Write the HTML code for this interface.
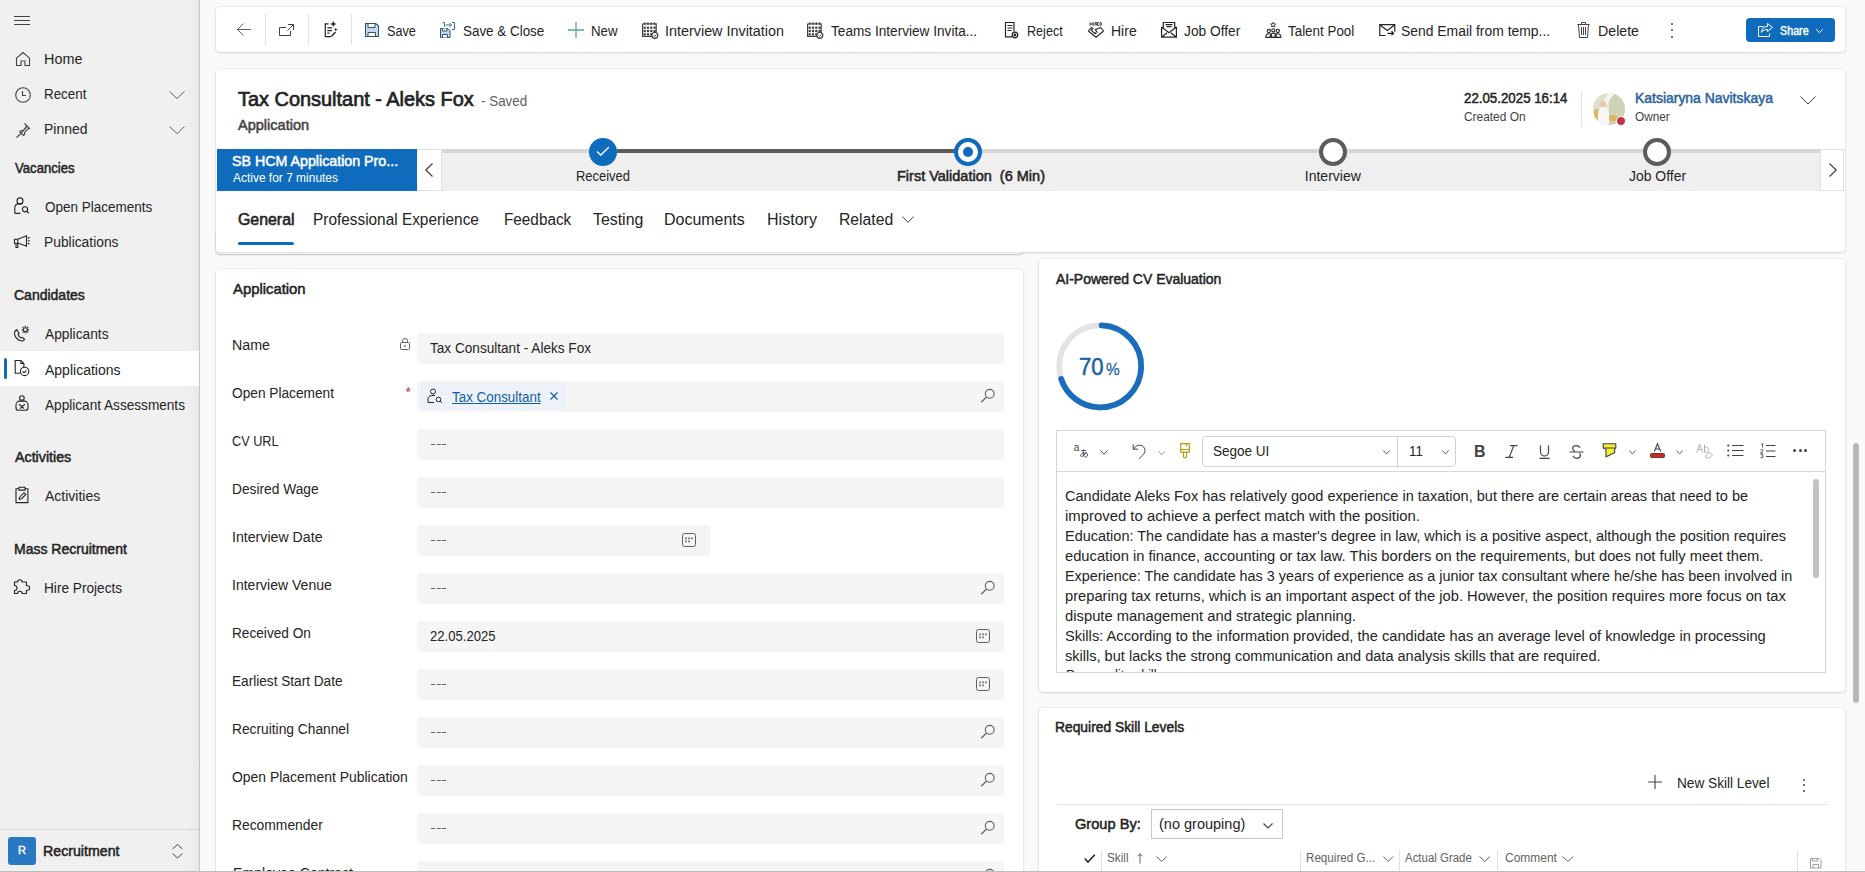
<!DOCTYPE html>
<html><head><meta charset="utf-8">
<style>
*{box-sizing:border-box;margin:0;padding:0}
html,body{width:1865px;height:872px;overflow:hidden}
body{font-family:"Liberation Sans",sans-serif;background:#fafafa;color:#242424;position:relative;font-size:14px}
.abs{position:absolute}
.t{position:absolute;white-space:pre;line-height:1}
.card{position:absolute;background:#fff;border-radius:4px;box-shadow:0 0 2px rgba(0,0,0,.12),0 1px 3px rgba(0,0,0,.13)}
svg{position:absolute;overflow:visible}
.inp{position:absolute;background:#f5f5f5;border-radius:4px;height:31px}
</style></head><body>
<div class="abs" style="left:0;top:0;width:199px;height:872px;background:#f0f0f0"></div>
<div class="abs" style="left:199px;top:0;width:1px;height:872px;background:#c4c4c4"></div>
<div class="abs" style="left:188px;top:0;width:11px;height:872px;background:linear-gradient(90deg,rgba(0,0,0,0),rgba(0,0,0,.035))"></div>
<svg style="left:14px;top:16px;" width="16" height="9" viewBox="0 0 16 9" fill="none" stroke="#424242" stroke-width="1"><path d="M0 .5H16M0 4.5H16M0 8.5H16" stroke="#424242"/></svg>
<div class="abs" style="left:0px;top:351px;width:199px;height:35px;background:#ffffff;"></div>
<div class="abs" style="left:4px;top:358px;width:3px;height:21px;background:#0f6cbd;border-radius:2px"></div>
<svg style="left:15px;top:51px;" width="16" height="16" viewBox="0 0 16 16" fill="none" stroke="#424242" stroke-width="1"><path d="M1.5 7.2 8 1.5l6.5 5.7V14.5h-4.5v-4.5h-4v4.5H1.5z" stroke="#424242" stroke-width="1.1"/></svg>
<div class="t" id="t0" style="left:43.97px;top:52.15px;font-size:14px;font-weight:400;color:#242424;transform:scaleX(1.0278);transform-origin:0 0;">Home</div>
<svg style="left:15px;top:87px;" width="16" height="16" viewBox="0 0 16 16" fill="none" stroke="#424242" stroke-width="1"><circle cx="8" cy="8" r="7.3" stroke="#424242" stroke-width="1.1"/><path d="M7.5 4v4.5H11" stroke="#424242" stroke-width="1.1"/></svg>
<div class="t" id="t1" style="left:44.05px;top:87.15px;font-size:14px;font-weight:400;color:#242424;transform:scaleX(0.9545);transform-origin:0 0;">Recent</div>
<svg style="left:15px;top:122px;" width="16" height="16" viewBox="0 0 16 16" fill="none" stroke="#424242" stroke-width="1"><path d="M9.5 1.5l5 5-2 .8-2.7 2.7-.3 2.5-1 1-2.2-2.2L1.5 15.5M6.3 11.3 4.7 9.7l1-1 2.5-.3L10.9 5.7l.8-2z" stroke="#424242" stroke-width="1.1"/></svg>
<div class="t" id="t2" style="left:44.00px;top:122.15px;font-size:14px;font-weight:400;color:#242424;">Pinned</div>
<div class="t" id="t3" style="left:14.97px;top:161.15px;font-size:14px;-webkit-text-stroke:0.50px #242424;color:#242424;transform:scaleX(0.9375);transform-origin:0 0;">Vacancies</div>
<svg style="left:0;top:0" width="40" height="872" viewBox="0 0 40 872" fill="none" stroke="#242424" stroke-width="1.1"><circle cx="20" cy="200.9" r="3"/><path d="M14.8 213.4v-5.5c0-2.3 1.7-4 4-4h3M14.8 213.4h5.5"/><circle cx="25" cy="209.3" r="2.6"/><path d="M26.9 211.2 29 213.4"/></svg>
<div class="t" id="t4" style="left:45.00px;top:200.15px;font-size:14px;font-weight:400;color:#242424;transform:scaleX(0.9640);transform-origin:0 0;">Open Placements</div>
<svg style="left:0;top:0" width="40" height="872" viewBox="0 0 40 872" fill="none" stroke="#242424" stroke-width="1.1"><path d="M14.5 239.2h3.2v4.3h-3.2zM17.7 239.2l8.8-3.5v10.5l-8.8-3.3zM16 243.5v4h1.8v-4M27.8 238.5l1.7-1.2M27.8 240.8h2M27.8 243l1.7 1.2"/></svg>
<div class="t" id="t5" style="left:44.01px;top:235.15px;font-size:14px;font-weight:400;color:#242424;transform:scaleX(0.9865);transform-origin:0 0;">Publications</div>
<div class="t" id="t6" style="left:14.00px;top:288.15px;font-size:14px;-webkit-text-stroke:0.50px #242424;color:#242424;">Candidates</div>
<svg style="left:0;top:0" width="40" height="872" viewBox="0 0 40 872" fill="none" stroke="#242424" stroke-width="1.1"><path d="M16.8 329.8c-1.6.8-2.6 2.2-2.3 4 .6 3 3.3 6.2 6.5 7 1.6.4 3-.4 3.6-1.5l-2.1-2-1.4.7c-1.4-.6-2.6-2-3-3.4l1-1z"/><circle cx="25.4" cy="329.7" r="2"/><path d="M25.4 325.8v1.3M25.4 332.3v1.3M21.5 329.7h1.3M28 329.7h1.3M22.6 326.9l.9.9M27.3 331.6l.9.9M28.2 326.9l-.9.9M23.5 331.6l-.9.9"/></svg>
<div class="t" id="t7" style="left:45.00px;top:327.15px;font-size:14px;font-weight:400;color:#242424;transform:scaleX(0.9844);transform-origin:0 0;">Applicants</div>
<svg style="left:0;top:0" width="40" height="872" viewBox="0 0 40 872" fill="none" stroke="#242424" stroke-width="1.1"><path d="M20 373.3h-4.8V360.5h5.7l3 3v3.5M20.9 360.5v3h3"/><circle cx="24.6" cy="371.4" r="4.2"/><path d="M22.7 371.5l1.3 1.3 2.4-2.4"/></svg>
<div class="t" id="t8" style="left:45.00px;top:363.15px;font-size:14px;font-weight:400;color:#242424;">Applications</div>
<svg style="left:0;top:0" width="40" height="872" viewBox="0 0 40 872" fill="none" stroke="#242424" stroke-width="1.1"><circle cx="21.9" cy="398" r="2.3"/><path d="M18.5 410.2c-1.5 0-2.5-1-2.5-2.3v-3c0-2 1.5-3.8 3.5-3.8h5c2 0 3.5 1.8 3.5 3.8v3c0 1.3-1 2.3-2.5 2.3zM19 404.3l3 2.2 3-2.2M20 408.5l2-1.5 2 1.5"/></svg>
<div class="t" id="t9" style="left:45.00px;top:398.15px;font-size:14px;font-weight:400;color:#242424;transform:scaleX(0.9722);transform-origin:0 0;">Applicant Assessments</div>
<div class="t" id="t10" style="left:15.01px;top:450.15px;font-size:14px;-webkit-text-stroke:0.50px #242424;color:#242424;transform:scaleX(1.0179);transform-origin:0 0;">Activities</div>
<svg style="left:0;top:0" width="40" height="872" viewBox="0 0 40 872" fill="none" stroke="#242424" stroke-width="1.1"><path d="M19 488.8h-3v13.8h11.9V488.8h-3M19 487.3h6v2.8h-6z"/><path d="M19.3 499.2l.5-2.3 4.2-4.2 1.8 1.8-4.2 4.2z"/></svg>
<div class="t" id="t11" style="left:45.00px;top:489.15px;font-size:14px;font-weight:400;color:#242424;">Activities</div>
<div class="t" id="t12" style="left:14.00px;top:542.15px;font-size:14px;-webkit-text-stroke:0.50px #242424;color:#242424;">Mass Recruitment</div>
<svg style="left:0;top:0" width="40" height="872" viewBox="0 0 40 872" fill="none" stroke="#242424" stroke-width="1.1"><path d="M19.8 579.8c1.4 0 2.3 1 2.3 2.2h4.3v3.5c1.8 0 3.3 1 3.3 2.5s-1.5 2.5-3.3 2.5v3h-4.3c0-1.2-.9-2.2-2.3-2.2s-2.3 1-2.3 2.2H14.5v-3c1.5 0 2.5-1 2.5-2.5s-1-2.5-2.5-2.5V582h3c0-1.2.9-2.2 2.3-2.2z"/></svg>
<div class="t" id="t13" style="left:44.03px;top:581.15px;font-size:14px;font-weight:400;color:#242424;transform:scaleX(0.9747);transform-origin:0 0;">Hire Projects</div>
<svg style="left:169px;top:91px;" width="16" height="8" viewBox="0 0 16 8" fill="none" stroke="#424242" stroke-width="1"><path d="M.5.5 8 7.5 15.5.5" stroke="#616161"/></svg>
<svg style="left:169px;top:126px;" width="16" height="8" viewBox="0 0 16 8" fill="none" stroke="#424242" stroke-width="1"><path d="M.5.5 8 7.5 15.5.5" stroke="#616161"/></svg>
<div class="abs" style="left:0px;top:829px;width:199px;height:1px;background:#d6d6d6;"></div>
<div class="abs" style="left:8px;top:837px;width:28px;height:28px;background:#2b78c2;border-radius:3px"></div>
<div class="t" id="t14" style="left:18.40px;top:844.77px;font-size:11.5px;-webkit-text-stroke:0.41px #ffffff;color:#ffffff;transform:scaleX(0.9625);transform-origin:0 0;">R</div>
<div class="t" id="t15" style="left:42.99px;top:844.15px;font-size:14px;-webkit-text-stroke:0.50px #242424;color:#242424;transform:scaleX(1.0133);transform-origin:0 0;">Recruitment</div>
<svg style="left:172px;top:844px;" width="11" height="14" viewBox="0 0 11 14" fill="none" stroke="#424242" stroke-width="1"><path d="M.5 5 5.5.5 10.5 5M.5 9.5l5 4.5 5-4.5" stroke="#424242"/></svg>
<div class="card" style="left:216px;top:7px;width:1629px;height:45px"></div>
<div class="card" style="left:216px;top:230px;width:807px;height:23.5px;box-shadow:0 1px 2px rgba(0,0,0,.22)"></div>
<div class="card" style="left:216px;top:69px;width:1629px;height:183px"></div>
<div class="card" style="left:216px;top:269px;width:807px;height:640px"></div>
<div class="card" style="left:1039px;top:259px;width:806px;height:433px"></div>
<div class="card" style="left:1039px;top:708px;width:806px;height:300px"></div>
<div class="abs" style="left:0px;top:871px;width:1865px;height:1px;background:#b9c0c0;"></div>
<svg style="left:237px;top:23px;" width="14" height="13" viewBox="0 0 14 13" fill="none" stroke="#424242" stroke-width="1"><path d="M6.5.5.5 6.5l6 6M.5 6.5h13.5" stroke="#616161"/></svg>
<div class="abs" style="left:265px;top:14px;width:1px;height:31px;background:#e0e0e0;"></div>
<div class="abs" style="left:308px;top:14px;width:1px;height:31px;background:#e0e0e0;"></div>
<div class="abs" style="left:351px;top:14px;width:1px;height:31px;background:#e0e0e0;"></div>
<svg style="left:279px;top:23.5px;" width="15" height="12" viewBox="0 0 15 12" fill="none" stroke="#424242" stroke-width="1"><path d="M7 3.5H.5v8h11V7M9 .5h5.5V6M14.5.5 8.5 6.5" stroke="#424242"/></svg>
<svg style="left:0;top:0" width="1" height="1" viewBox="0 0 1 1" overflow="visible" fill="none" stroke="#242424" stroke-width="1.2"><path d="M328.5 23.8H325.3v12.8h6"/><path d="M327.3 27.8h4.8M327.3 30.6h4.8M327.3 33.2h2.2" stroke-width="1.3"/><path d="M333.3 20.8l.9 2.3 2.3.9-2.3.9-.9 2.3-.9-2.3-2.3-.9 2.3-.9z" fill="#242424" stroke="none"/><path d="M335.8 27.4l.6 1.5 1.5.6-1.5.6-.6 1.5-.6-1.5-1.5-.6 1.5-.6z" fill="#242424" stroke="none"/><path d="M331.5 36.2l4-4.2" stroke-width="1.4"/></svg>
<svg style="left:365px;top:23px;" width="14" height="14" viewBox="0 0 14 14" fill="none" stroke="#424242" stroke-width="1"><path d="M.5.5h10.5l2.5 2.5v10.5H.5z" fill="#c4d7ee" stroke="#2c4f72"/><path d="M3 .5v4h7v-4" fill="#fff" stroke="#2c4f72"/><path d="M3 13.5v-4h7.5v4" fill="#fff" stroke="#2c4f72"/><path d="M.5.5h10.5l2.5 2.5v10.5H.5z" stroke="#2c4f72"/></svg>
<div class="t" id="t16" style="left:387.05px;top:23.85px;font-size:14px;font-weight:400;color:#242424;transform:scaleX(0.9032);transform-origin:0 0;">Save</div>
<svg style="left:440px;top:22px;" width="15" height="16" viewBox="0 0 15 16" fill="none" stroke="#424242" stroke-width="1"><path d="M.5 6.5h7.5l2 2v7H.5z" fill="#c4d7ee" stroke="#2c4f72"/><path d="M2.5 15.5v-3h5v3M2.5 6.5v2.5h4.5V6.5" fill="#fff" stroke="#2c4f72"/><path d="M4.5 4.5V.5H2.5M12 .5h2.5v7H12M5.5 3h6M9.5 1l2 2-2 2" stroke="#2c6fb2"/></svg>
<div class="t" id="t17" style="left:462.61px;top:23.85px;font-size:14px;font-weight:400;color:#242424;transform:scaleX(0.9583);transform-origin:0 0;">Save &amp; Close</div>
<svg style="left:568px;top:22px;" width="16" height="16" viewBox="0 0 16 16" fill="none" stroke="#424242" stroke-width="1"><path d="M8 0v16M0 8h16" stroke="#5ba889" stroke-width="1.3"/></svg>
<div class="t" id="t18" style="left:591.03px;top:23.85px;font-size:14px;font-weight:400;color:#242424;transform:scaleX(0.9464);transform-origin:0 0;">New</div>
<svg style="left:642px;top:22px;" width="17" height="16" viewBox="0 0 17 16" fill="none" stroke="#424242" stroke-width="1"><path d="M.6 1.8h13.6v9M.6 1.8v12.6h9.4" stroke="#424242" stroke-width="1.2"/><path d="M2.7.3v2.4M6 .3v2.4M9.3.3v2.4M12.6.3v2.4" stroke="#424242" stroke-width="1.1"/><rect x="1.6" y="4.6" width="2.2" height="2.2" fill="#424242" stroke="none"/><rect x="4.9" y="4.6" width="2.2" height="2.2" fill="#424242" stroke="none"/><rect x="8.2" y="4.6" width="2.2" height="2.2" fill="#424242" stroke="none"/><rect x="11.5" y="4.6" width="2.2" height="2.2" fill="#424242" stroke="none"/><rect x="1.6" y="7.9" width="2.2" height="2.2" fill="#424242" stroke="none"/><rect x="4.9" y="7.9" width="2.2" height="2.2" fill="#424242" stroke="none"/><rect x="8.2" y="7.9" width="2.2" height="2.2" fill="#424242" stroke="none"/><rect x="11.5" y="7.9" width="2.2" height="2.2" fill="#424242" stroke="none"/><rect x="1.6" y="11.2" width="2.2" height="2.2" fill="#424242" stroke="none"/><rect x="4.9" y="11.2" width="2.2" height="2.2" fill="#424242" stroke="none"/><rect x="8.2" y="11.2" width="2.2" height="2.2" fill="#424242" stroke="none"/><circle cx="12.8" cy="13.3" r="3" fill="#fff" stroke="#424242" stroke-width="1.2"/><path d="M11.5 13.5l1 1 1.8-2" stroke="#424242" stroke-width="1"/></svg>
<div class="t" id="t19" style="left:664.97px;top:23.85px;font-size:14px;font-weight:400;color:#242424;transform:scaleX(1.0263);transform-origin:0 0;">Interview Invitation</div>
<svg style="left:807px;top:22px;" width="17" height="16" viewBox="0 0 17 16" fill="none" stroke="#424242" stroke-width="1"><path d="M.6 1.8h13.6v9M.6 1.8v12.6h9.4" stroke="#424242" stroke-width="1.2"/><path d="M2.7.3v2.4M6 .3v2.4M9.3.3v2.4M12.6.3v2.4" stroke="#424242" stroke-width="1.1"/><rect x="1.6" y="4.6" width="2.2" height="2.2" fill="#424242" stroke="none"/><rect x="4.9" y="4.6" width="2.2" height="2.2" fill="#424242" stroke="none"/><rect x="8.2" y="4.6" width="2.2" height="2.2" fill="#424242" stroke="none"/><rect x="11.5" y="4.6" width="2.2" height="2.2" fill="#424242" stroke="none"/><rect x="1.6" y="7.9" width="2.2" height="2.2" fill="#424242" stroke="none"/><rect x="4.9" y="7.9" width="2.2" height="2.2" fill="#424242" stroke="none"/><rect x="8.2" y="7.9" width="2.2" height="2.2" fill="#424242" stroke="none"/><rect x="11.5" y="7.9" width="2.2" height="2.2" fill="#424242" stroke="none"/><rect x="1.6" y="11.2" width="2.2" height="2.2" fill="#424242" stroke="none"/><rect x="4.9" y="11.2" width="2.2" height="2.2" fill="#424242" stroke="none"/><rect x="8.2" y="11.2" width="2.2" height="2.2" fill="#424242" stroke="none"/><circle cx="12.8" cy="13.3" r="3" fill="#fff" stroke="#424242" stroke-width="1.2"/><path d="M11.5 13.5l1 1 1.8-2" stroke="#424242" stroke-width="1"/></svg>
<div class="t" id="t20" style="left:830.60px;top:23.85px;font-size:14px;font-weight:400;color:#242424;transform:scaleX(0.9732);transform-origin:0 0;">Teams Interview Invita...</div>
<svg style="left:0;top:0" width="1" height="1" overflow="visible" fill="none" stroke="#242424" stroke-width="1.2"><path d="M1012 36.8h-6.5V22.5h8.5v9M1007.5 25.5h5M1007.5 28h5M1007.5 30.5h4" /><circle cx="1015" cy="35" r="2.8" stroke-width="1.3"/><circle cx="1015" cy="35" r=".8" fill="#242424"/></svg>
<div class="t" id="t21" style="left:1027.23px;top:23.85px;font-size:14px;font-weight:400;color:#242424;transform:scaleX(0.9000);transform-origin:0 0;">Reject</div>
<svg style="left:0;top:0" width="1" height="1" overflow="visible" fill="none" stroke="#242424" stroke-width="1.1"><path d="M1090 22.4v3.2M1092 22.4v3.2M1090 24h2M1093.4 22.4v3.2M1095 25.6v-3.2h1.4c.8 0 .8 1.6 0 1.6h-1.4M1096.4 24l.8 1.6M1098.8 22.4h-1.4v3.2h1.4M1097.4 24h1.2M1100 22.4v3.2h.8c1.2 0 1.2-3.2 0-3.2z" stroke-width=".8"/><path d="M1088.3 31l3-3.4 2 .6M1103.7 31l-3-3.4-2 .6M1088.3 31l7.7 6.3 7.7-6.3M1093.3 28.2l-2 2 3.5 3.5M1098.7 28.2l-3.5 1.5 2 2.5M1094.8 32.5l1.5 1.5M1096.2 31.2l1.5 1.5"/></svg>
<div class="t" id="t22" style="left:1111.00px;top:23.85px;font-size:14px;font-weight:400;color:#242424;">Hire</div>
<svg style="left:0;top:0" width="1" height="1" overflow="visible" fill="none" stroke="#242424" stroke-width="1.2"><path d="M1161.6 27v10.2h14.8V27M1161.6 27l7.4 5.8 7.4-5.8M1161.6 37.2l5.5-4.5M1176.4 37.2l-5.5-4.5M1163.3 28.3V22.5h11.4v5.8"/><path d="M1165.5 24.6h7M1166.5 26.6h5" stroke-width="1.4"/></svg>
<div class="t" id="t23" style="left:1184.00px;top:23.85px;font-size:14px;font-weight:400;color:#242424;transform:scaleX(0.9825);transform-origin:0 0;">Job Offer</div>
<svg style="left:0;top:0" width="1" height="1" overflow="visible" fill="none" stroke="#242424" stroke-width="1.1"><path d="M1273.2 22.3l.8 1.6 1.7.2-1.3 1.2.4 1.7-1.6-.9-1.6.9.4-1.7-1.3-1.2 1.7-.2z" stroke-width=".9"/><circle cx="1268.8" cy="31" r="1.6"/><circle cx="1273.3" cy="30.3" r="1.6"/><circle cx="1277.8" cy="31" r="1.6"/><path d="M1265.7 37.3c0-2 1.3-3.5 3.1-3.5s3.1 1.5 3.1 3.5M1270.2 37.3c0-2.3 1.3-4.2 3.1-4.2s3.1 1.9 3.1 4.2M1274.7 37.3c0-2 1.3-3.5 3.1-3.5s3.1 1.5 3.1 3.5M1265.3 37.4h16"/></svg>
<div class="t" id="t24" style="left:1288.00px;top:23.85px;font-size:14px;font-weight:400;color:#242424;transform:scaleX(0.9565);transform-origin:0 0;">Talent Pool</div>
<svg style="left:0;top:0" width="1" height="1" overflow="visible" fill="none" stroke="#242424" stroke-width="1.2"><path d="M1385.5 35.5h-5.7V24.7h15v7M1379.8 24.7l7.5 5.8 7.5-5.8"/><path d="M1387.5 33.3h6M1391.5 31.3l2 2-2 2" stroke-width="1.3"/></svg>
<div class="t" id="t25" style="left:1401.01px;top:23.85px;font-size:14px;font-weight:400;color:#242424;transform:scaleX(0.9932);transform-origin:0 0;">Send Email from temp...</div>
<svg style="left:1577px;top:22px;" width="13" height="16" viewBox="0 0 13 16" fill="none" stroke="#424242" stroke-width="1"><path d="M.5 2.5h12M4.5 2.5v-2h4v2M1.5 2.5l1 13h8l1-13M4.5 5v8M6.5 5v8M8.5 5v8" stroke="#424242"/></svg>
<div class="t" id="t26" style="left:1597.99px;top:23.85px;font-size:14px;font-weight:400;color:#242424;transform:scaleX(1.0128);transform-origin:0 0;">Delete</div>
<div class="abs" style="left:1671px;top:22.5px;width:2.2px;height:2.2px;border-radius:50%;background:#424242"></div>
<div class="abs" style="left:1671px;top:29px;width:2.2px;height:2.2px;border-radius:50%;background:#424242"></div>
<div class="abs" style="left:1671px;top:35.5px;width:2.2px;height:2.2px;border-radius:50%;background:#424242"></div>
<div class="abs" style="left:1746px;top:18px;width:89px;height:24px;background:#0f6cbd;border-radius:4px"></div>
<svg style="left:1758px;top:23px;" width="15" height="14" viewBox="0 0 15 14" fill="none" stroke="#424242" stroke-width="1"><path d="M5.5 3.5H.5v10h11v-3M9.5.5l5 4-5 4V6.5c-3 0-5 1-6 3 0-3.5 2-6 6-6z" stroke="#ffffff"/></svg>
<div class="t" id="t27" style="left:1780.00px;top:24.62px;font-size:12.5px;-webkit-text-stroke:0.45px #ffffff;color:#ffffff;transform:scaleX(0.8588);transform-origin:0 0;">Share</div>
<svg style="left:1816px;top:29px;" width="7" height="4" viewBox="0 0 7 4" fill="none" stroke="#424242" stroke-width="1"><path d="M.3.3l3.2 3.4 3.2-3.4" stroke="#ffffff"/></svg>
<div class="t" id="t28" style="left:238.19px;top:89.07px;font-size:20px;-webkit-text-stroke:0.72px #242424;color:#242424;transform:scaleX(0.9958);transform-origin:0 0;-webkit-text-stroke:0.7px #242424">Tax Consultant - Aleks Fox</div>
<div class="t" id="t29" style="left:481.21px;top:94.15px;font-size:14px;font-weight:400;color:#616161;transform:scaleX(0.9574);transform-origin:0 0;">- Saved</div>
<div class="t" id="t30" style="left:238.22px;top:118.35px;font-size:14px;-webkit-text-stroke:0.50px #424242;color:#424242;transform:scaleX(1.0377);transform-origin:0 0;">Application</div>
<div class="t" id="t31" style="left:1464.03px;top:91.35px;font-size:14px;-webkit-text-stroke:0.50px #242424;color:#242424;transform:scaleX(0.9495);transform-origin:0 0;">22.05.2025 16:14</div>
<div class="t" id="t32" style="left:1464.00px;top:110.84px;font-size:12px;font-weight:400;color:#424242;transform:scaleX(0.9918);transform-origin:0 0;">Created On</div>
<div class="abs" style="left:1580.5px;top:91px;width:1px;height:36px;background:#e0e0e0;"></div>
<div class="abs" style="left:1593px;top:93px;width:32px;height:32px;border-radius:50%;overflow:hidden;background:#e8e6dc">
<div class="abs" style="left:0;top:0;width:14px;height:32px;background:#e2ddd3"></div>
<div class="abs" style="left:16px;top:0px;width:16px;height:32px;background:#cfd3b6"></div>
<div class="abs" style="left:12px;top:-4px;width:5px;height:20px;background:#f6f4ef;transform:rotate(35deg)"></div>
<div class="abs" style="left:1px;top:16px;width:7px;height:12px;background:#dcb65a;border-radius:3px"></div>
<div class="abs" style="left:16px;top:22px;width:8px;height:6px;background:#dcb65a;border-radius:3px"></div>
<div class="abs" style="left:7px;top:8px;width:6px;height:7px;border-radius:50%;background:#e6c9a8"></div>
<div class="abs" style="left:5px;top:14px;width:11px;height:18px;border-radius:40% 40% 10% 10%;background:#f8f7f4"></div>
</div>
<div class="abs" style="left:1615.9px;top:115.8px;width:10px;height:10px;border-radius:50%;background:#c4314b;border:1px solid #fff"></div>
<div class="t" id="t33" style="left:1635.20px;top:91.15px;font-size:14px;-webkit-text-stroke:0.50px #2a62a0;color:#2a62a0;transform:scaleX(0.9957);transform-origin:0 0;">Katsiaryna Navitskaya</div>
<div class="t" id="t34" style="left:1635.20px;top:110.84px;font-size:12px;font-weight:400;color:#424242;transform:scaleX(0.9829);transform-origin:0 0;">Owner</div>
<svg style="left:1800px;top:96px;" width="16" height="9" viewBox="0 0 16 9" fill="none" stroke="#424242" stroke-width="1"><path d="M.5.5 8 8 15.5.5" stroke="#424242"/></svg>
<div class="abs" style="left:442px;top:149px;width:1378px;height:42px;background:#efefef;"></div>
<div class="abs" style="left:442px;top:149px;width:1378px;height:3.5px;background:#d6d6d6;"></div>
<div class="abs" style="left:617px;top:149px;width:338px;height:3.5px;background:#5c5c5c;"></div>
<div class="abs" style="left:217px;top:149px;width:200px;height:42px;background:#0f6cbd;"></div>
<div class="t" id="t35" style="left:231.59px;top:153.55px;font-size:14px;-webkit-text-stroke:0.50px #ffffff;color:#ffffff;transform:scaleX(1.0167);transform-origin:0 0;">SB HCM Application Pro...</div>
<div class="t" id="t36" style="left:232.60px;top:171.84px;font-size:12px;font-weight:400;color:#ffffff;transform:scaleX(0.9962);transform-origin:0 0;">Active for 7 minutes</div>
<div class="abs" style="left:417px;top:149px;width:25px;height:42px;background:#fff;border:1px solid #e0e0e0;border-left:none"></div>
<svg style="left:424.5px;top:163px;" width="8" height="14" viewBox="0 0 8 14" fill="none" stroke="#424242" stroke-width="1"><path d="M7.5.5 .8 7l6.7 6.5" stroke="#424242" stroke-width="1.2"/></svg>
<div class="abs" style="left:1820px;top:149px;width:24px;height:42px;background:#fff;border:1px solid #e0e0e0"></div>
<svg style="left:1829px;top:163px;" width="8" height="14" viewBox="0 0 8 14" fill="none" stroke="#424242" stroke-width="1"><path d="M.5.5 7.2 7 .5 13.5" stroke="#424242" stroke-width="1.2"/></svg>
<div class="abs" style="left:589px;top:138px;width:28px;height:28px;border-radius:50%;background:#0f6cbd"></div>
<svg style="left:596px;top:145.5px;" width="14" height="10" viewBox="0 0 14 10" fill="none" stroke="#424242" stroke-width="1"><path d="M1 5.5 4.8 9 13 1" stroke="#ffffff" stroke-width="1.3"/></svg>
<div class="abs" style="left:953.5px;top:138px;width:28px;height:28px;border-radius:50%;background:#fff;border:4px solid #0f6cbd"></div>
<div class="abs" style="left:962.5px;top:147px;width:10px;height:10px;border-radius:50%;background:#0f6cbd"></div>
<div class="abs" style="left:1319px;top:138px;width:28px;height:28px;border-radius:50%;background:#fff;border:4px solid #5c5c5c"></div>
<div class="abs" style="left:1643px;top:138px;width:28px;height:28px;border-radius:50%;background:#fff;border:4px solid #5c5c5c"></div>
<div class="t" id="t37" style="left:576.22px;top:168.85px;font-size:14px;font-weight:400;color:#242424;transform:scaleX(0.9246);transform-origin:0 0;">Received</div>
<div class="t" id="t38" style="left:896.75px;top:169.15px;font-size:14px;-webkit-text-stroke:0.50px #242424;color:#242424;transform:scaleX(1.0355);transform-origin:0 0;">First Validation  (6 Min)</div>
<div class="t" id="t39" style="left:1304.79px;top:169.35px;font-size:14px;font-weight:400;color:#242424;">Interview</div>
<div class="t" id="t40" style="left:1628.79px;top:169.35px;font-size:14px;font-weight:400;color:#242424;transform:scaleX(0.9947);transform-origin:0 0;">Job Offer</div>
<div class="t" id="t41" style="left:238.00px;top:212.46px;font-size:16px;-webkit-text-stroke:0.58px #242424;color:#242424;transform:scaleX(0.9929);transform-origin:0 0;">General</div>
<div class="abs" style="left:238px;top:242px;width:55.6px;height:3px;background:#0f6cbd;border-radius:2px"></div>
<div class="t" id="t42" style="left:313.25px;top:212.46px;font-size:16px;font-weight:400;color:#242424;transform:scaleX(0.9614);transform-origin:0 0;">Professional Experience</div>
<div class="t" id="t43" style="left:504.04px;top:212.46px;font-size:16px;font-weight:400;color:#242424;transform:scaleX(0.9565);transform-origin:0 0;">Feedback</div>
<div class="t" id="t44" style="left:592.80px;top:212.46px;font-size:16px;font-weight:400;color:#242424;transform:scaleX(0.9918);transform-origin:0 0;">Testing</div>
<div class="t" id="t45" style="left:664.00px;top:212.46px;font-size:16px;font-weight:400;color:#242424;transform:scaleX(0.9975);transform-origin:0 0;">Documents</div>
<div class="t" id="t46" style="left:766.59px;top:212.46px;font-size:16px;font-weight:400;color:#242424;transform:scaleX(1.0041);transform-origin:0 0;">History</div>
<div class="t" id="t47" style="left:839.02px;top:212.46px;font-size:16px;font-weight:400;color:#242424;transform:scaleX(0.9811);transform-origin:0 0;">Related</div>
<svg style="left:901.5px;top:215.5px;" width="12" height="7" viewBox="0 0 12 7" fill="none" stroke="#424242" stroke-width="1"><path d="M.5.5l5.5 6 5.5-6" stroke="#424242"/></svg>
<div class="t" id="t48" style="left:233.39px;top:280.90px;font-size:15px;-webkit-text-stroke:0.54px #242424;color:#242424;transform:scaleX(0.9890);transform-origin:0 0;">Application</div>
<div class="t" id="t49" style="left:232.37px;top:337.75px;font-size:14px;font-weight:400;color:#242424;transform:scaleX(1.0167);transform-origin:0 0;">Name</div>
<div class="inp" style="left:417px;top:332.5px;width:587px"></div>
<div class="t" id="t50" style="left:430.40px;top:341.15px;font-size:14px;font-weight:400;color:#242424;transform:scaleX(0.9715);transform-origin:0 0;">Tax Consultant - Aleks Fox</div>
<svg style="left:400px;top:338px;" width="10" height="12" viewBox="0 0 10 12" fill="none" stroke="#424242" stroke-width="1"><rect x=".5" y="4.5" width="9" height="7" rx="1" stroke="#616161"/><path d="M2.5 4.5V3a2.5 2.5 0 0 1 5 0v1.5" stroke="#616161"/><circle cx="5" cy="8" r=".9" fill="#616161" stroke="none"/></svg>
<div class="t" id="t51" style="left:232.41px;top:385.75px;font-size:14px;font-weight:400;color:#242424;transform:scaleX(0.9779);transform-origin:0 0;">Open Placement</div>
<div class="inp" style="left:417px;top:380.5px;width:587px"></div>
<div class="abs" style="left:419.5px;top:382.5px;width:146px;height:27px;background:#edf2f8;border-radius:4px"></div>
<svg style="left:427px;top:388.0px;" width="16" height="16" viewBox="0 0 16 16" fill="none" stroke="#424242" stroke-width="1"><circle cx="6" cy="3.5" r="2.5" stroke="#242424"/><path d="M1 14.5V11c0-2 1.5-3.5 3.5-3.5H8M1 14.5h6" stroke="#242424"/><circle cx="11.5" cy="11.5" r="2.3" stroke="#242424"/><path d="M13.2 13.2 15 15" stroke="#242424"/></svg>
<div class="t" id="t52" style="left:451.77px;top:389.65px;font-size:14px;font-weight:400;color:#115ea3;transform:scaleX(0.9570);transform-origin:0 0;text-decoration:underline;text-underline-offset:1px">Tax Consultant</div>
<svg style="left:549.8px;top:392.0px;" width="8" height="8" viewBox="0 0 8 8" fill="none" stroke="#424242" stroke-width="1"><path d="M.5.5l7 7M7.5.5l-7 7" stroke="#115ea3" stroke-width="1.2"/></svg>
<svg style="left:980px;top:388.0px;" width="15" height="15" viewBox="0 0 15 15" fill="none" stroke="#424242" stroke-width="1"><circle cx="9.7" cy="5.8" r="4.4" stroke="#616161" stroke-width="1.1"/><path d="M6.6 9 1.2 14.3" stroke="#616161" stroke-width="1.2"/></svg>
<div class="t" id="t53" style="left:405.50px;top:384.75px;font-size:14px;font-weight:400;color:#b4343c;">*</div>
<div class="t" id="t54" style="left:232.46px;top:433.75px;font-size:14px;font-weight:400;color:#242424;transform:scaleX(0.9080);transform-origin:0 0;">CV URL</div>
<div class="inp" style="left:417px;top:428.5px;width:587px"></div>
<div class="abs" style="left:430.7px;top:443.5px;width:15.5px;height:1px;background:repeating-linear-gradient(90deg,#616161 0,#616161 4px,transparent 4px,transparent 5.7px)"></div>
<div class="t" id="t55" style="left:232.40px;top:481.75px;font-size:14px;font-weight:400;color:#242424;transform:scaleX(0.9816);transform-origin:0 0;">Desired Wage</div>
<div class="inp" style="left:417px;top:476.5px;width:587px"></div>
<div class="abs" style="left:430.7px;top:491.5px;width:15.5px;height:1px;background:repeating-linear-gradient(90deg,#616161 0,#616161 4px,transparent 4px,transparent 5.7px)"></div>
<div class="t" id="t56" style="left:232.38px;top:529.75px;font-size:14px;font-weight:400;color:#242424;transform:scaleX(1.0114);transform-origin:0 0;">Interview Date</div>
<div class="inp" style="left:417px;top:524.5px;width:292.5px"></div>
<div class="abs" style="left:430.7px;top:539.5px;width:15.5px;height:1px;background:repeating-linear-gradient(90deg,#616161 0,#616161 4px,transparent 4px,transparent 5.7px)"></div>
<svg style="left:681.5px;top:533.0px;" width="14" height="14" viewBox="0 0 14 14" fill="none" stroke="#424242" stroke-width="1"><rect x=".5" y=".5" width="13" height="13" rx="2" stroke="#616161"/><path d="M3.3 5.4h1.4M6.3 5.4h1.4M9.3 5.4h1.4M3.3 8.4h1.4M6.3 8.4h1.4" stroke="#505050" stroke-width="1.7"/></svg>
<div class="t" id="t57" style="left:232.39px;top:577.75px;font-size:14px;font-weight:400;color:#242424;transform:scaleX(1.0020);transform-origin:0 0;">Interview Venue</div>
<div class="inp" style="left:417px;top:572.5px;width:587px"></div>
<div class="abs" style="left:430.7px;top:587.5px;width:15.5px;height:1px;background:repeating-linear-gradient(90deg,#616161 0,#616161 4px,transparent 4px,transparent 5.7px)"></div>
<svg style="left:980px;top:580.0px;" width="15" height="15" viewBox="0 0 15 15" fill="none" stroke="#424242" stroke-width="1"><circle cx="9.7" cy="5.8" r="4.4" stroke="#616161" stroke-width="1.1"/><path d="M6.6 9 1.2 14.3" stroke="#616161" stroke-width="1.2"/></svg>
<div class="t" id="t58" style="left:232.41px;top:625.75px;font-size:14px;font-weight:400;color:#242424;transform:scaleX(0.9747);transform-origin:0 0;">Received On</div>
<div class="inp" style="left:417px;top:620.5px;width:587px"></div>
<div class="t" id="t59" style="left:430.41px;top:629.15px;font-size:14px;font-weight:400;color:#242424;transform:scaleX(0.9348);transform-origin:0 0;">22.05.2025</div>
<svg style="left:975.5px;top:629.0px;" width="14" height="14" viewBox="0 0 14 14" fill="none" stroke="#424242" stroke-width="1"><rect x=".5" y=".5" width="13" height="13" rx="2" stroke="#616161"/><path d="M3.3 5.4h1.4M6.3 5.4h1.4M9.3 5.4h1.4M3.3 8.4h1.4M6.3 8.4h1.4" stroke="#505050" stroke-width="1.7"/></svg>
<div class="t" id="t60" style="left:232.41px;top:673.75px;font-size:14px;font-weight:400;color:#242424;transform:scaleX(0.9732);transform-origin:0 0;">Earliest Start Date</div>
<div class="inp" style="left:417px;top:668.5px;width:587px"></div>
<div class="abs" style="left:430.7px;top:683.5px;width:15.5px;height:1px;background:repeating-linear-gradient(90deg,#616161 0,#616161 4px,transparent 4px,transparent 5.7px)"></div>
<svg style="left:975.5px;top:677.0px;" width="14" height="14" viewBox="0 0 14 14" fill="none" stroke="#424242" stroke-width="1"><rect x=".5" y=".5" width="13" height="13" rx="2" stroke="#616161"/><path d="M3.3 5.4h1.4M6.3 5.4h1.4M9.3 5.4h1.4M3.3 8.4h1.4M6.3 8.4h1.4" stroke="#505050" stroke-width="1.7"/></svg>
<div class="t" id="t61" style="left:232.40px;top:721.75px;font-size:14px;font-weight:400;color:#242424;transform:scaleX(0.9831);transform-origin:0 0;">Recruiting Channel</div>
<div class="inp" style="left:417px;top:716.5px;width:587px"></div>
<div class="abs" style="left:430.7px;top:731.5px;width:15.5px;height:1px;background:repeating-linear-gradient(90deg,#616161 0,#616161 4px,transparent 4px,transparent 5.7px)"></div>
<svg style="left:980px;top:724.0px;" width="15" height="15" viewBox="0 0 15 15" fill="none" stroke="#424242" stroke-width="1"><circle cx="9.7" cy="5.8" r="4.4" stroke="#616161" stroke-width="1.1"/><path d="M6.6 9 1.2 14.3" stroke="#616161" stroke-width="1.2"/></svg>
<div class="t" id="t62" style="left:232.39px;top:769.75px;font-size:14px;font-weight:400;color:#242424;transform:scaleX(0.9954);transform-origin:0 0;">Open Placement Publication</div>
<div class="inp" style="left:417px;top:764.5px;width:587px"></div>
<div class="abs" style="left:430.7px;top:779.5px;width:15.5px;height:1px;background:repeating-linear-gradient(90deg,#616161 0,#616161 4px,transparent 4px,transparent 5.7px)"></div>
<svg style="left:980px;top:772.0px;" width="15" height="15" viewBox="0 0 15 15" fill="none" stroke="#424242" stroke-width="1"><circle cx="9.7" cy="5.8" r="4.4" stroke="#616161" stroke-width="1.1"/><path d="M6.6 9 1.2 14.3" stroke="#616161" stroke-width="1.2"/></svg>
<div class="t" id="t63" style="left:232.40px;top:817.75px;font-size:14px;font-weight:400;color:#242424;transform:scaleX(0.9890);transform-origin:0 0;">Recommender</div>
<div class="inp" style="left:417px;top:812.5px;width:587px"></div>
<div class="abs" style="left:430.7px;top:827.5px;width:15.5px;height:1px;background:repeating-linear-gradient(90deg,#616161 0,#616161 4px,transparent 4px,transparent 5.7px)"></div>
<svg style="left:980px;top:820.0px;" width="15" height="15" viewBox="0 0 15 15" fill="none" stroke="#424242" stroke-width="1"><circle cx="9.7" cy="5.8" r="4.4" stroke="#616161" stroke-width="1.1"/><path d="M6.6 9 1.2 14.3" stroke="#616161" stroke-width="1.2"/></svg>
<div class="t" id="t64" style="left:233.39px;top:865.75px;font-size:14px;font-weight:400;color:#242424;transform:scaleX(1.0083);transform-origin:0 0;">Employee Contract</div>
<div class="inp" style="left:417px;top:860.5px;width:587px"></div>
<div class="abs" style="left:430.7px;top:875.5px;width:15.5px;height:1px;background:repeating-linear-gradient(90deg,#616161 0,#616161 4px,transparent 4px,transparent 5.7px)"></div>
<svg style="left:980px;top:868.0px;" width="15" height="15" viewBox="0 0 15 15" fill="none" stroke="#424242" stroke-width="1"><circle cx="9.7" cy="5.8" r="4.4" stroke="#616161" stroke-width="1.1"/><path d="M6.6 9 1.2 14.3" stroke="#616161" stroke-width="1.2"/></svg>
<div class="t" id="t65" style="left:1055.79px;top:271.65px;font-size:14px;-webkit-text-stroke:0.50px #242424;color:#242424;transform:scaleX(0.9976);transform-origin:0 0;">AI-Powered CV Evaluation</div>
<svg style="left:1056px;top:321.5px" width="88" height="88" viewBox="0 0 88 88"><circle cx="44.2" cy="44.3" r="41" stroke="#e3e3e3" stroke-width="5.8" fill="none"/><circle cx="44.2" cy="44.3" r="41" stroke="#1a6dbd" stroke-width="5.8" fill="none" stroke-linecap="round" stroke-dasharray="178.5 400" transform="rotate(-88 44.2 44.3)"/></svg>
<div class="t" id="t66" style="left:1079.04px;top:355.93px;font-size:23px;-webkit-text-stroke:0.83px #1c5f9f;color:#1c5f9f;transform:scaleX(0.9615);transform-origin:0 0;-webkit-text-stroke:0.5px #1c5f9f">70</div>
<div class="t" id="t67" style="left:1106.00px;top:361.01px;font-size:17px;-webkit-text-stroke:0.61px #1c5f9f;color:#1c5f9f;transform:scaleX(0.9067);transform-origin:0 0;-webkit-text-stroke:0.3px #1c5f9f">%</div>
<div class="abs" style="left:1056px;top:430px;width:770px;height:243px;border:1px solid #d6d6d6;background:#fff"></div>
<div class="abs" style="left:1057px;top:471px;width:768px;height:1px;background:#d6d6d6;"></div>
<div class="t" id="t68" style="left:1073.80px;top:443.14px;font-size:10px;font-weight:400;color:#424242;">a</div>
<svg style="left:1080px;top:448.5px;" width="8" height="8.5" viewBox="0 0 8 8.5" fill="none" stroke="#424242" stroke-width="1"><path d="M1.2 1.6h5M3.4.3c-.3 2.6-.2 5.5.9 7.6M6.3 3.2C4.5 6 2.6 7.6 1.3 7.4.2 7.2.5 5.2 2.8 4.3c2.7-1 4.8-.3 4.8 1.6 0 1.5-1.2 2.3-2.6 2.4" stroke="#424242" stroke-width=".9"/></svg>
<svg style="left:1100px;top:449.5px;" width="8" height="5" viewBox="0 0 8 5" fill="none" stroke="#424242" stroke-width="1"><path d="M.4.4 4 4.2 7.6.4" stroke="#424242"/></svg>
<svg style="left:1131.5px;top:443px;" width="14" height="16" viewBox="0 0 14 16" fill="none" stroke="#424242" stroke-width="1"><path d="M1.2 1.2v5h5" stroke="#424242"/><path d="M1.5 6C3 3.5 5 2.2 7.5 2.2c3 0 5.5 2.3 5.5 5.3 0 2-1 3.3-2.5 4.8L7 15.8" stroke="#424242"/></svg>
<svg style="left:1157.5px;top:450.5px;" width="7.5" height="4" viewBox="0 0 7.5 4" fill="none" stroke="#424242" stroke-width="1"><path d="M.4.4 3.75 3.6 7.1.4" stroke="#8a8a8a"/></svg>
<svg style="left:1180px;top:443px;" width="10" height="16" viewBox="0 0 10 16" fill="none" stroke="#424242" stroke-width="1"><path d="M.7.7h8.6v8.5H.7zM.7 6.5h8.6M3.5 9.2v4.3a1.5 1.5 0 0 0 3 0V9.2M6.5.7v2.5" stroke="#b89a10" stroke-width="1.2"/></svg>
<div class="abs" style="left:1201.5px;top:435.5px;width:254px;height:31px;border:1px solid #d1d1d1;border-radius:4px"></div>
<div class="abs" style="left:1396.5px;top:436px;width:1px;height:30px;background:#d1d1d1;"></div>
<div class="t" id="t69" style="left:1213.40px;top:444.25px;font-size:14px;font-weight:400;color:#242424;transform:scaleX(0.9649);transform-origin:0 0;">Segoe UI</div>
<svg style="left:1383px;top:449.5px;" width="7" height="4.5" viewBox="0 0 7 4.5" fill="none" stroke="#424242" stroke-width="1"><path d="M.4.4 3.5 4 6.6.4" stroke="#616161"/></svg>
<div class="t" id="t70" style="left:1408.85px;top:444.25px;font-size:14px;font-weight:400;color:#242424;transform:scaleX(0.9462);transform-origin:0 0;">11</div>
<svg style="left:1442px;top:449.5px;" width="7" height="4.5" viewBox="0 0 7 4.5" fill="none" stroke="#424242" stroke-width="1"><path d="M.4.4 3.5 4 6.6.4" stroke="#616161"/></svg>
<div class="t" id="t71" style="left:1474.06px;top:443.11px;font-size:17px;font-weight:700;color:#424242;transform:scaleX(0.9364);transform-origin:0 0;">B</div>
<svg style="left:1505.3px;top:444.6px;" width="13" height="13" viewBox="0 0 13 13" fill="none" stroke="#424242" stroke-width="1"><path d="M5 .6h7.5M.5 12.4H8M8.8.6 4.2 12.4" stroke="#424242" stroke-width="1.2"/></svg>
<svg style="left:1539px;top:444.6px;" width="11" height="14" viewBox="0 0 11 14" fill="none" stroke="#424242" stroke-width="1"><path d="M1.5.5v6.5a4 4 0 0 0 8 0V.5M.5 13.3h10" stroke="#424242" stroke-width="1.2"/></svg>
<svg style="left:1569px;top:444.5px;" width="15" height="14" viewBox="0 0 15 14" fill="none" stroke="#424242" stroke-width="1"><path d="M11 2.8C10.2 1.4 8.9.7 7.3.7 5.2.7 3.6 1.9 3.6 3.6c0 1.3.8 2 2.3 2.6M.5 7h14M4 11c.8 1.5 2 2.3 3.6 2.3 2.2 0 3.8-1.2 3.8-3 0-.8-.3-1.5-.9-2" stroke="#424242" stroke-width="1.2"/></svg>
<svg style="left:1602px;top:442.5px;" width="15" height="17" viewBox="0 0 15 17" fill="none" stroke="#424242" stroke-width="1"><path d="M1.2.8h12.6v4.2l-1.2 1.3v3.4L4 13.8V6.3L1.2 5z" fill="#f5f03a" stroke="#424242" stroke-width="1.1"/><path d="M1.2 5h12.6" stroke="#424242" stroke-width="1"/></svg>
<svg style="left:1628.5px;top:450px;" width="7" height="4.5" viewBox="0 0 7 4.5" fill="none" stroke="#424242" stroke-width="1"><path d="M.4.4 3.5 4 6.6.4" stroke="#616161"/></svg>
<svg style="left:1649.5px;top:442.5px;" width="15" height="10" viewBox="0 0 15 10" fill="none" stroke="#424242" stroke-width="1"><path d="M4.3 8.5 7.5.8l3.2 7.7M5.4 6h4.2" stroke="#424242" stroke-width="1.1"/></svg>
<div class="abs" style="left:1649.5px;top:452.5px;width:15px;height:5.5px;background:#b8322a;border-radius:1.5px;border:1px solid #8a2a22"></div>
<svg style="left:1676px;top:450px;" width="7" height="4.5" viewBox="0 0 7 4.5" fill="none" stroke="#424242" stroke-width="1"><path d="M.4.4 3.5 4 6.6.4" stroke="#616161"/></svg>
<svg style="left:1696px;top:443px;" width="18" height="16" viewBox="0 0 18 16" fill="none" stroke="#424242" stroke-width="1"><path d="M.7 9.5 3.7 1.5 6.7 9.5M1.8 6.5h3.8M8.5 1.5v8M8.5 5.5c.5-1 1.2-1.5 2-1.5 1.3 0 2 1 2 2.7s-.7 2.8-2 2.8c-.8 0-1.5-.5-2-1.5" stroke="#b0b0b0"/><path d="M9.5 13l4-4 3 3-3 3h-3z" stroke="#b0b0b0"/></svg>
<svg style="left:1727px;top:444px;" width="17" height="13" viewBox="0 0 17 13" fill="none" stroke="#424242" stroke-width="1"><path d="M5 1.5h11.5M5 6.5h11.5M5 11.5h11.5" stroke="#424242" stroke-width="1.1"/><circle cx="1.3" cy="1.5" r="1.1" fill="#424242" stroke="none"/><circle cx="1.3" cy="6.5" r="1.1" fill="#424242" stroke="none"/><circle cx="1.3" cy="11.5" r="1.1" fill="#424242" stroke="none"/></svg>
<svg style="left:1760px;top:443px;" width="16" height="16" viewBox="0 0 16 16" fill="none" stroke="#424242" stroke-width="1"><path d="M6 2.5h9.5M6 8h9.5M6 13.5h9.5" stroke="#424242" stroke-width="1.1"/><path d="M1.5 1.2 2.6.5v4M.5 7.2c.3-.5.8-.7 1.3-.7.7 0 1.2.4 1.2 1 0 .8-1.5 1.5-2.5 2.5h2.6M.6 11.6c.3-.3.7-.5 1.2-.5.7 0 1.2.4 1.2.9s-.5.9-1.1.9c.7 0 1.2.4 1.2 1s-.6 1-1.3 1c-.5 0-1-.2-1.3-.6" stroke="#424242" stroke-width=".9"/></svg>
<div class="abs" style="left:1793.0px;top:449.3px;width:3px;height:3px;border-radius:50%;background:#424242"></div>
<div class="abs" style="left:1798.5px;top:449.3px;width:3px;height:3px;border-radius:50%;background:#424242"></div>
<div class="abs" style="left:1804.0px;top:449.3px;width:3px;height:3px;border-radius:50%;background:#424242"></div>
<div class="t" id="t72" style="left:1065.18px;top:488.95px;font-size:14px;font-weight:400;color:#242424;transform:scaleX(1.0374);transform-origin:0 0;">Candidate Aleks Fox has relatively good experience in taxation, but there are certain areas that need to be</div>
<div class="t" id="t73" style="left:1065.17px;top:508.95px;font-size:14px;font-weight:400;color:#242424;transform:scaleX(1.0630);transform-origin:0 0;">improved to achieve a perfect match with the position.</div>
<div class="t" id="t74" style="left:1065.18px;top:528.95px;font-size:14px;font-weight:400;color:#242424;transform:scaleX(1.0351);transform-origin:0 0;">Education: The candidate has a master's degree in law, which is a positive aspect, although the position requires</div>
<div class="t" id="t75" style="left:1065.17px;top:548.95px;font-size:14px;font-weight:400;color:#242424;transform:scaleX(1.0513);transform-origin:0 0;">education in finance, accounting or tax law. This borders on the requirements, but does not fully meet them.</div>
<div class="t" id="t76" style="left:1065.18px;top:568.95px;font-size:14px;font-weight:400;color:#242424;transform:scaleX(1.0260);transform-origin:0 0;">Experience: The candidate has 3 years of experience as a junior tax consultant where he/she has been involved in</div>
<div class="t" id="t77" style="left:1065.17px;top:588.95px;font-size:14px;font-weight:400;color:#242424;transform:scaleX(1.0501);transform-origin:0 0;">preparing tax returns, which is an important aspect of the job. However, the position requires more focus on tax</div>
<div class="t" id="t78" style="left:1065.17px;top:608.95px;font-size:14px;font-weight:400;color:#242424;transform:scaleX(1.0562);transform-origin:0 0;">dispute management and strategic planning.</div>
<div class="t" id="t79" style="left:1065.17px;top:628.95px;font-size:14px;font-weight:400;color:#242424;transform:scaleX(1.0470);transform-origin:0 0;">Skills: According to the information provided, the candidate has an average level of knowledge in processing</div>
<div class="t" id="t80" style="left:1065.18px;top:648.95px;font-size:14px;font-weight:400;color:#242424;transform:scaleX(1.0397);transform-origin:0 0;">skills, but lacks the strong communication and data analysis skills that are required.</div>
<div class="abs" style="left:1057px;top:655px;width:768px;height:17px;overflow:hidden"><div class="t" style="left:8.6px;top:12.8px;font-size:14px;color:#242424;transform:scaleX(.94);transform-origin:0 0">Personality skills</div></div>
<div class="abs" style="left:1813.4px;top:478.7px;width:5.4px;height:99.6px;background:#c2c2c2;border-radius:3px"></div>
<div class="abs" style="left:1853px;top:443px;width:6px;height:260px;background:#b8b8b8;border-radius:3px"></div>
<div class="t" id="t81" style="left:1054.80px;top:720.25px;font-size:14px;-webkit-text-stroke:0.50px #242424;color:#242424;transform:scaleX(0.9877);transform-origin:0 0;">Required Skill Levels</div>
<svg style="left:1647.5px;top:775px;" width="14" height="14" viewBox="0 0 14 14" fill="none" stroke="#424242" stroke-width="1"><path d="M7 0v14M0 7h14" stroke="#424242" stroke-width="1.1"/></svg>
<div class="t" id="t82" style="left:1677.03px;top:776.15px;font-size:14px;font-weight:400;color:#242424;transform:scaleX(0.9742);transform-origin:0 0;">New Skill Level</div>
<div class="abs" style="left:1803px;top:778.5px;width:2px;height:2px;border-radius:50%;background:#424242"></div>
<div class="abs" style="left:1803px;top:784px;width:2px;height:2px;border-radius:50%;background:#424242"></div>
<div class="abs" style="left:1803px;top:789.5px;width:2px;height:2px;border-radius:50%;background:#424242"></div>
<div class="abs" style="left:1057px;top:804px;width:770px;height:1px;background:#e0e0e0;"></div>
<div class="t" id="t83" style="left:1075.37px;top:817.35px;font-size:14px;-webkit-text-stroke:0.50px #242424;color:#242424;transform:scaleX(1.0435);transform-origin:0 0;">Group By:</div>
<div class="abs" style="left:1151px;top:809.4px;width:131.7px;height:29.2px;border:1px solid #c8c8c8;background:#fff"></div>
<div class="t" id="t84" style="left:1158.96px;top:817.15px;font-size:14px;font-weight:400;color:#242424;transform:scaleX(1.0366);transform-origin:0 0;">(no grouping)</div>
<svg style="left:1263px;top:823px;" width="10" height="5.5" viewBox="0 0 10 5.5" fill="none" stroke="#424242" stroke-width="1"><path d="M.5.5 5 5 9.5.5" stroke="#424242" stroke-width="1.2"/></svg>
<svg style="left:1084px;top:854px;" width="11.5" height="9" viewBox="0 0 11.5 9" fill="none" stroke="#424242" stroke-width="1"><path d="M.7 4.5 4 8 10.8.7" stroke="#242424" stroke-width="1.6"/></svg>
<div class="abs" style="left:1100.5px;top:849.5px;width:1px;height:23px;background:#e0e0e0;"></div>
<div class="abs" style="left:1299.6px;top:849.5px;width:1px;height:23px;background:#e0e0e0;"></div>
<div class="abs" style="left:1398.7px;top:849.5px;width:1px;height:23px;background:#e0e0e0;"></div>
<div class="abs" style="left:1497.4px;top:849.5px;width:1px;height:23px;background:#e0e0e0;"></div>
<div class="abs" style="left:1796.6px;top:849.5px;width:1px;height:23px;background:#e0e0e0;"></div>
<div class="t" id="t85" style="left:1107.41px;top:852.42px;font-size:12.5px;font-weight:400;color:#616161;transform:scaleX(0.9409);transform-origin:0 0;">Skill</div>
<svg style="left:1137px;top:852.6px;" width="6" height="10.5" viewBox="0 0 6 10.5" fill="none" stroke="#424242" stroke-width="1"><path d="M3 10.5V.8M.5 3.3 3 .8l2.5 2.5" stroke="#616161"/></svg>
<svg style="left:1156px;top:855.5px;" width="11.4" height="6" viewBox="0 0 11.4 6" fill="none" stroke="#424242" stroke-width="1"><path d="M.5.5 5.7 5.5 10.9.5" stroke="#616161"/></svg>
<div class="t" id="t86" style="left:1306.07px;top:852.42px;font-size:12.5px;font-weight:400;color:#616161;transform:scaleX(0.9306);transform-origin:0 0;">Required G...</div>
<svg style="left:1382.5px;top:855.5px;" width="10.5" height="6" viewBox="0 0 10.5 6" fill="none" stroke="#424242" stroke-width="1"><path d="M.5.5 5.25 5.5 10 .5" stroke="#616161"/></svg>
<div class="t" id="t87" style="left:1405.41px;top:852.42px;font-size:12.5px;font-weight:400;color:#616161;transform:scaleX(0.9162);transform-origin:0 0;">Actual Grade</div>
<svg style="left:1479px;top:855.5px;" width="11.5" height="6" viewBox="0 0 11.5 6" fill="none" stroke="#424242" stroke-width="1"><path d="M.5.5 5.75 5.5 11 .5" stroke="#616161"/></svg>
<div class="t" id="t88" style="left:1505.00px;top:852.42px;font-size:12.5px;font-weight:400;color:#616161;transform:scaleX(0.9574);transform-origin:0 0;">Comment</div>
<svg style="left:1562px;top:855.5px;" width="11.8" height="6" viewBox="0 0 11.8 6" fill="none" stroke="#424242" stroke-width="1"><path d="M.5.5 5.9 5.5 11.3.5" stroke="#616161"/></svg>
<svg style="left:1809.6px;top:857.5px;" width="11.4" height="10" viewBox="0 0 11.4 10" fill="none" stroke="#424242" stroke-width="1"><path d="M.5.5h8.5l2 2v7.5H.5zM3 10V6.5h5.5V10M2.5.5v2.5h5V.5" stroke="#9e9e9e"/></svg>
<div class="abs" style="left:0px;top:871px;width:1865px;height:1px;background:#b9c0c0;"></div>
</body></html>
